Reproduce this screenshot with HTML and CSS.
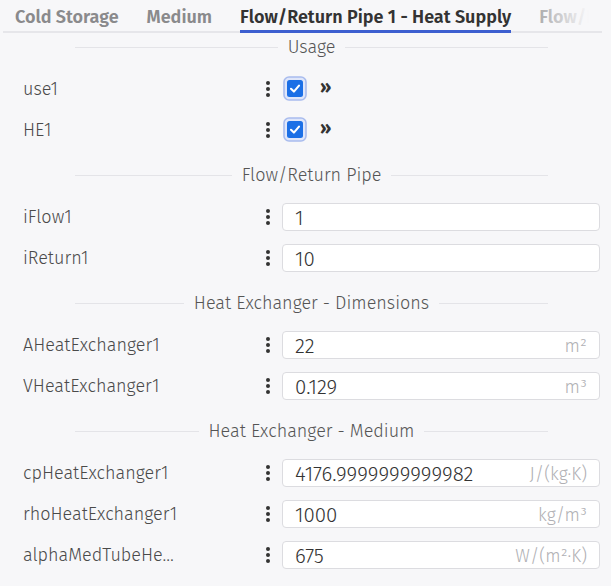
FILE: index.html
```html
<!DOCTYPE html>
<html lang="en">
<head>
  <meta charset="UTF-8">
  <meta name="viewport" content="width=device-width, initial-scale=1.0">
  <title>Flow/Return Pipe 1 - Heat Supply</title>
  <link rel="stylesheet" href="styles.css">
</head>
<body>
  <div class="panel">
    <div class="tabs">
      <div class="tab">Cold Storage</div>
      <div class="tab">Medium</div>
      <div class="tab active">Flow/Return Pipe 1 - Heat Supply</div>
      <div class="tab">Flow/Return Pipe 2 - Heat Supply</div>
    </div>

    <div class="section">
      <div class="section-title"><span>Usage</span></div>
      <div class="row">
        <div class="label">use1</div>
        <div class="menu"><svg width="6" height="18" viewBox="0 0 6 18"><circle cx="3" cy="3" r="2"/><circle cx="3" cy="9" r="2"/><circle cx="3" cy="15" r="2"/></svg></div>
        <div class="check-cell">
          <svg class="check" width="24" height="25" viewBox="0 0 24 25"><rect x="1" y="1" width="22" height="23" rx="5" fill="#dfe6fa" stroke="#a9bcee" stroke-width="1.6"/><rect x="4" y="4" width="16" height="17" rx="2.5" fill="#1b6fe6"/><path d="M8 12.8 L10.9 15.6 L16 9.6" fill="none" stroke="#fff" stroke-width="2.1" stroke-linecap="round" stroke-linejoin="round"/></svg>
          <span class="more">»</span>
        </div>
      </div>
      <div class="row">
        <div class="label">HE1</div>
        <div class="menu"><svg width="6" height="18" viewBox="0 0 6 18"><circle cx="3" cy="3" r="2"/><circle cx="3" cy="9" r="2"/><circle cx="3" cy="15" r="2"/></svg></div>
        <div class="check-cell">
          <svg class="check" width="24" height="25" viewBox="0 0 24 25"><rect x="1" y="1" width="22" height="23" rx="5" fill="#dfe6fa" stroke="#a9bcee" stroke-width="1.6"/><rect x="4" y="4" width="16" height="17" rx="2.5" fill="#1b6fe6"/><path d="M8 12.8 L10.9 15.6 L16 9.6" fill="none" stroke="#fff" stroke-width="2.1" stroke-linecap="round" stroke-linejoin="round"/></svg>
          <span class="more">»</span>
        </div>
      </div>
    </div>

    <div class="section">
      <div class="section-title"><span>Flow/Return Pipe</span></div>
      <div class="row">
        <div class="label">iFlow1</div>
        <div class="menu"><svg width="6" height="18" viewBox="0 0 6 18"><circle cx="3" cy="3" r="2"/><circle cx="3" cy="9" r="2"/><circle cx="3" cy="15" r="2"/></svg></div>
        <div class="field"><span class="value">1</span></div>
      </div>
      <div class="row">
        <div class="label">iReturn1</div>
        <div class="menu"><svg width="6" height="18" viewBox="0 0 6 18"><circle cx="3" cy="3" r="2"/><circle cx="3" cy="9" r="2"/><circle cx="3" cy="15" r="2"/></svg></div>
        <div class="field"><span class="value">10</span></div>
      </div>
    </div>

    <div class="section">
      <div class="section-title"><span>Heat Exchanger - Dimensions</span></div>
      <div class="row">
        <div class="label">AHeatExchanger1</div>
        <div class="menu"><svg width="6" height="18" viewBox="0 0 6 18"><circle cx="3" cy="3" r="2"/><circle cx="3" cy="9" r="2"/><circle cx="3" cy="15" r="2"/></svg></div>
        <div class="field"><span class="value">22</span><span class="unit">m²</span></div>
      </div>
      <div class="row">
        <div class="label">VHeatExchanger1</div>
        <div class="menu"><svg width="6" height="18" viewBox="0 0 6 18"><circle cx="3" cy="3" r="2"/><circle cx="3" cy="9" r="2"/><circle cx="3" cy="15" r="2"/></svg></div>
        <div class="field"><span class="value">0.129</span><span class="unit">m³</span></div>
      </div>
    </div>

    <div class="section">
      <div class="section-title"><span>Heat Exchanger - Medium</span></div>
      <div class="row">
        <div class="label">cpHeatExchanger1</div>
        <div class="menu"><svg width="6" height="18" viewBox="0 0 6 18"><circle cx="3" cy="3" r="2"/><circle cx="3" cy="9" r="2"/><circle cx="3" cy="15" r="2"/></svg></div>
        <div class="field"><span class="value">4176.9999999999982</span><span class="unit">J/(kg·K)</span></div>
      </div>
      <div class="row">
        <div class="label">rhoHeatExchanger1</div>
        <div class="menu"><svg width="6" height="18" viewBox="0 0 6 18"><circle cx="3" cy="3" r="2"/><circle cx="3" cy="9" r="2"/><circle cx="3" cy="15" r="2"/></svg></div>
        <div class="field"><span class="value">1000</span><span class="unit">kg/m³</span></div>
      </div>
      <div class="row">
        <div class="label">alphaMedTubeHeatExchanger1</div>
        <div class="menu"><svg width="6" height="18" viewBox="0 0 6 18"><circle cx="3" cy="3" r="2"/><circle cx="3" cy="9" r="2"/><circle cx="3" cy="15" r="2"/></svg></div>
        <div class="field"><span class="value">675</span><span class="unit">W/(m²·K)</span></div>
      </div>
    </div>
  </div>
</body>
</html>
```

FILE: styles.css
```css
* {
  margin: 0;
  padding: 0;
  box-sizing: border-box;
}

body {
  font-family: 'Fira Sans', 'Open Sans', sans-serif;
  background-color: #f7f7f9;
  color: #444;
}

.panel {
  width: 611px;
}

/* tabs */
.tabs {
  position: relative;
  display: flex;
  gap: 28px;
  margin: 0 9px 0 3px;
  padding-left: 12px;
  height: 33px;
  background: linear-gradient(#e6e6ea, #e6e6ea) left bottom / 100% 2px no-repeat;
  overflow: hidden;
  white-space: nowrap;
}

.tabs::after {
  content: '';
  position: absolute;
  top: 0;
  right: 0;
  width: 72px;
  height: 31px;
  background: linear-gradient(to right, rgba(247, 247, 249, 0.2), #f7f7f9 82%);
}

.tab {
  flex: none;
  font-size: 18px;
  font-weight: 600;
  line-height: 22px;
  padding-top: 6px;
  padding-bottom: 2px;
  height: 33px;
  border-bottom: 3px solid transparent;
  color: #8a8a8c;
}

.tab.active {
  color: #333;
  border-bottom-color: #3d5fd0;
}

/* sections */
.section {
  padding-top: 3px;
  padding-bottom: 1px;
}

.section + .section {
  padding-top: 19px;
}

.section-title {
  display: flex;
  align-items: center;
  gap: 10px;
  margin: 0 63px 0 75px;
  height: 22px;
  font-size: 18px;
  font-weight: 300;
  color: #555;
  margin-bottom: 16px;
}

.section-title::before,
.section-title::after {
  content: '';
  flex: 1;
  height: 1px;
  background-color: #e4e4e8;
}

.row {
  display: grid;
  grid-template-columns: 231px 20px 1fr;
  column-gap: 4px;
  align-items: center;
  height: 29px;
  padding: 0 11px 0 23px;
  margin-bottom: 12px;
}

.section .row:last-child {
  margin-bottom: 0;
}

.label {
  max-width: 158px;
  font-size: 18px;
  font-weight: 300;
  color: #4a4a4a;
  white-space: nowrap;
  overflow: hidden;
  text-overflow: ellipsis;
}

.menu {
  display: flex;
  justify-content: center;
  fill: #333;
}

.menu svg {
  display: block;
}

.check-cell {
  display: flex;
  align-items: center;
  gap: 13px;
  margin-left: 1px;
}

.check {
  display: block;
}

.more {
  font-size: 18px;
  font-weight: 700;
  color: #333;
  line-height: 20px;
  margin-top: -3px;
}

.field {
  display: flex;
  align-items: center;
  justify-content: space-between;
  height: 28px;
  padding: 2px 12px 0 12px;
  background-color: #fff;
  border: 1px solid #dcdce0;
  border-radius: 4px;
}

.value {
  font-size: 20.5px;
  font-weight: 300;
  color: #333;
}

.unit {
  font-size: 18px;
  font-weight: 300;
  color: #b0b0b4;
}
```
